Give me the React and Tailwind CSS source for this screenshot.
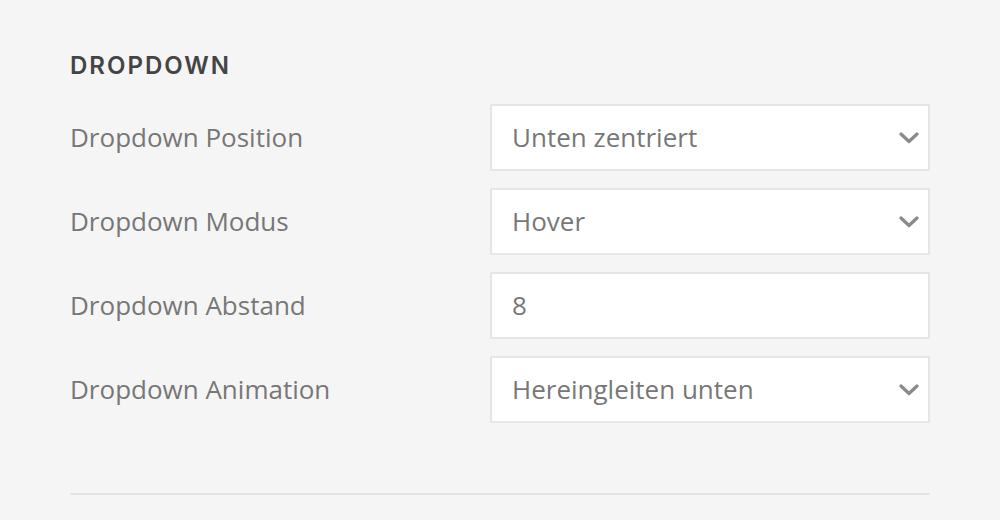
import React from 'react';

const rows = [
  { label: 'Dropdown Position', value: 'Unten zentriert', select: true },
  { label: 'Dropdown Modus', value: 'Hover', select: true },
  { label: 'Dropdown Abstand', value: '8', select: false },
  { label: 'Dropdown Animation', value: 'Hereingleiten unten', select: true },
];

const Chevron = () => (
  <svg width="20" height="12" viewBox="0 0 20 12" fill="none">
    <path d="M2 2 L10 9.5 L18 2" stroke="#8a8a8a" strokeWidth="3.2" strokeLinecap="round" strokeLinejoin="round" />
  </svg>
);

export default function App() {
  return (
    <div className="min-h-[520px] w-[1000px] bg-[#f5f5f5] px-[70px] pt-[51px] font-['Open_Sans',sans-serif]">
      <h2 className="text-[24px] font-semibold leading-[30px] tracking-[2px] text-[#444444] font-['Inter',sans-serif]">
        DROPDOWN
      </h2>

      <div className="mt-[23px] flex flex-col gap-[17px]">
        {rows.map((row) => (
          <div key={row.label} className="flex items-center">
            <div className="w-[420px] text-[26px] text-[#777777]">{row.label}</div>
            <div className="flex h-[67px] w-[440px] items-center justify-between border-2 border-[#e6e6e6] bg-white pl-5 pr-[9px]">
              <span className="text-[26px] text-[#777777]">{row.value}</span>
              {row.select && <Chevron />}
            </div>
          </div>
        ))}
      </div>

      <div className="mt-[70px] h-[2px] bg-[#e3e3e3]" />
    </div>
  );
}
